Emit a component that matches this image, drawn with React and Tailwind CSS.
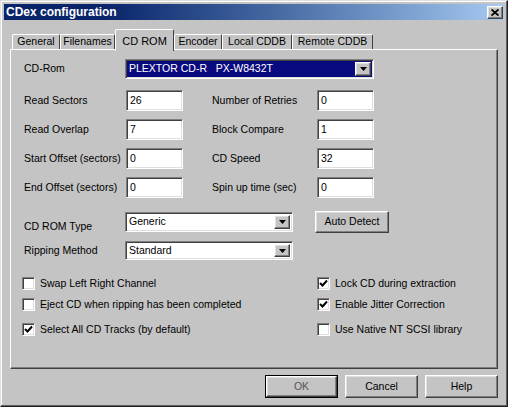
import React from 'react';

const raised =
  'border border-t-white border-l-white border-r-[#404040] border-b-[#404040] shadow-[inset_-1px_-1px_0_#808080,inset_1px_1px_0_#dfdfdf]';
const sunken =
  'border border-t-[#808080] border-l-[#808080] border-r-white border-b-white shadow-[inset_1px_1px_0_#404040,inset_-1px_-1px_0_#dfdfdf]';

function ArrowBtn({ h = 'h-full' }) {
  return (
    <div className={`${raised} ${h} w-[16px] bg-[#c4c4c4] flex items-center justify-center shrink-0`}>
      <svg width="7" height="4" viewBox="0 0 7 4">
        <polygon points="0,0 7,0 3.5,4" fill="#000" />
      </svg>
    </div>
  );
}

function TextBox({ value }) {
  return (
    <div className={`${sunken} w-[57px] h-[21px] bg-white flex items-center pl-[3px] text-[10.5px] text-black`}>
      {value}
    </div>
  );
}

function Combo({ value, h }) {
  return (
    <div className={`${sunken} w-[168px] ${h} bg-white flex items-center justify-between p-[2px] pl-[3px] text-[10.5px] text-black`}>
      <span>{value}</span>
      <ArrowBtn />
    </div>
  );
}

function Check({ checked, label }) {
  return (
    <div className="flex items-center h-[13px]">
      <div className={`${sunken} w-[13px] h-[13px] bg-white shrink-0 flex items-center justify-center`}>
        {checked && (
          <svg width="9" height="9" viewBox="0 0 9 9">
            <polyline points="1,4 3.5,6.5 8,1.5" fill="none" stroke="#000" strokeWidth="2" />
          </svg>
        )}
      </div>
      <span className="ml-[5px] text-[10.5px] text-black whitespace-nowrap">{label}</span>
    </div>
  );
}

function FieldRow({ left, lv, right, rv }) {
  return (
    <div className="flex items-center h-[21px]">
      <span className="w-[102px] text-[10.5px] text-black">{left}</span>
      <TextBox value={lv} />
      <span className="w-[29px]" />
      <span className="w-[105px] text-[10.5px] text-black">{right}</span>
      <TextBox value={rv} />
    </div>
  );
}

export default function App() {
  const tabs = [
    { label: 'General', w: 'w-[48px]' },
    { label: 'Filenames', w: 'w-[55px]' },
    { label: 'CD ROM', w: 'w-[59px]', active: true },
    { label: 'Encoder', w: 'w-[48px]' },
    { label: 'Local CDDB', w: 'w-[70px]' },
    { label: 'Remote CDDB', w: 'w-[81px]' },
  ];

  return (
    <div className="w-[512px] h-[411px] bg-white font-['Liberation_Sans',Arial,sans-serif]">
      <div className="w-[508px] h-[407px] bg-[#c4c4c4] p-[3px] flex flex-col border border-t-[#dfdfdf] border-l-[#dfdfdf] border-r-[#202020] border-b-[#202020] shadow-[inset_-1px_-1px_0_#606060,inset_1px_1px_0_#fff]">
        {/* Title bar */}
        <div className="h-[16px] flex items-center justify-between pl-[2px] pr-[1px] bg-gradient-to-r from-[#0a246a] from-20% to-[#a6caf0]">
          <span className="text-white font-bold text-[12px] leading-none">CDex configuration</span>
          <div className={`${raised} w-[16px] h-[13px] bg-[#c4c4c4] flex items-center justify-center`}>
            <svg width="8" height="7" viewBox="0 0 8 7">
              <path d="M0.5 0.5 L7.5 6.5 M7.5 0.5 L0.5 6.5" stroke="#000" strokeWidth="1.8" />
            </svg>
          </div>
        </div>

        <div className="px-[6px]">
          {/* Tabs */}
          <div className="flex items-end h-[20px] mt-[9px] pl-[2px] relative z-10">
            {tabs.map((t) =>
              t.active ? (
                <div
                  key={t.label}
                  className={`${t.w} h-[22px] -mb-[2px] bg-[#c4c4c4] border-t border-l border-r border-t-white border-l-white border-r-[#404040] rounded-t-[2px] flex items-start justify-center pt-[3px] text-[11px] text-black`}
                >
                  {t.label}
                </div>
              ) : (
                <div
                  key={t.label}
                  className={`${t.w} h-[15px] bg-[#c4c4c4] border-t border-l border-r border-t-white border-l-white border-r-[#404040] rounded-t-[2px] flex items-center justify-center text-[10.5px] text-black`}
                >
                  {t.label}
                </div>
              )
            )}
          </div>

          {/* Panel */}
          <div className="h-[320px] border border-t-white border-l-white border-r-[#404040] border-b-[#404040] shadow-[inset_-1px_-1px_0_#808080] pl-[13px] pt-[9px]">
            <div className="flex items-center h-[20px]">
              <span className="w-[101px] text-[10.5px] text-black">CD-Rom</span>
              <div className={`${sunken} w-[249px] h-[20px] bg-[#0a0a80] flex items-center justify-between p-[2px] pl-[3px]`}>
                <span className="text-[10.5px] text-white whitespace-pre">PLEXTOR CD-R   PX-W8432T</span>
                <ArrowBtn />
              </div>
            </div>

            <div className="flex flex-col gap-[8px] mt-[11px]">
              <FieldRow left="Read Sectors" lv="26" right="Number of Retries" rv="0" />
              <FieldRow left="Read Overlap" lv="7" right="Block Compare" rv="1" />
              <FieldRow left="Start Offset (sectors)" lv="0" right="CD Speed" rv="32" />
              <FieldRow left="End Offset (sectors)" lv="0" right="Spin up time (sec)" rv="0" />
            </div>

            <div className="flex items-end h-[20px] mt-[14px]">
              <span className="w-[101px] h-[20px] flex items-end text-[10.5px] leading-[12px] text-black">CD ROM Type</span>
              <Combo value="Generic" h="h-[20px]" />
              <div className={`${raised} ml-[22px] self-start -mt-[1px] w-[74px] h-[22px] flex items-center justify-center text-[10.5px] text-black`}>
                Auto Detect
              </div>
            </div>

            <div className="flex items-center h-[19px] mt-[9px]">
              <span className="w-[101px] text-[10.5px] text-black">Ripping Method</span>
              <Combo value="Standard" h="h-[19px]" />
            </div>

            <div className="grid grid-cols-[295px_auto] -ml-[2px] mt-[17px] gap-y-0">
              <Check label="Swap Left Right Channel" />
              <Check checked label="Lock CD during extraction" />
              <div className="mt-[8px]"><Check label="Eject CD when ripping has been completed" /></div>
              <div className="mt-[8px]"><Check checked label="Enable Jitter Correction" /></div>
              <div className="mt-[12px]"><Check checked label="Select All CD Tracks (by default)" /></div>
              <div className="mt-[12px]"><Check label="Use Native NT SCSI library" /></div>
            </div>
          </div>

          {/* Buttons */}
          <div className="flex justify-end gap-[7px] mt-[6px]">
            <div className="w-[73px] h-[23px] border border-black">
              <div className={`${raised} w-full h-full flex items-center justify-center text-[10.5px] text-[#555]`}>OK</div>
            </div>
            <div className={`${raised} w-[73px] h-[23px] flex items-center justify-center text-[10.5px] text-black`}>Cancel</div>
            <div className={`${raised} w-[73px] h-[23px] flex items-center justify-center text-[10.5px] text-black`}>Help</div>
          </div>
        </div>
      </div>
    </div>
  );
}
